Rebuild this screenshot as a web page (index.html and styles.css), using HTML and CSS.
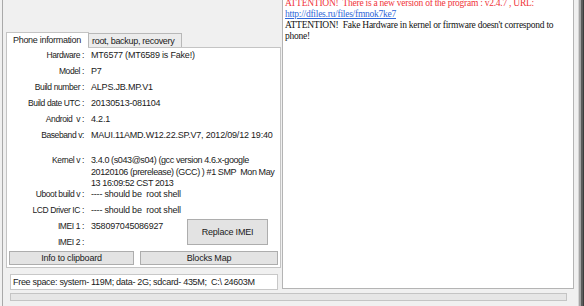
FILE: index.html
```html
<!DOCTYPE html>
<html lang="en">
<head>
    <meta charset="UTF-8">
    <title>MTK Droid Tools</title>
    <link rel="stylesheet" href="styles.css">
</head>
<body>

<div class="window">
    <div class="client">
        <div class="top">
            <div class="left">
                <div class="tabs">
                    <div class="tab active">Phone information</div>
                    <div class="tab">root, backup, recovery</div>
                </div>
                <div class="panel">
                    <div class="row"><span class="label">Hardware :</span><span class="value">MT6577 (MT6589 is Fake!)</span></div>
                    <div class="row"><span class="label">Model :</span><span class="value">P7</span></div>
                    <div class="row"><span class="label">Build number :</span><span class="value">ALPS.JB.MP.V1</span></div>
                    <div class="row"><span class="label">Build date UTC :</span><span class="value">20130513-081104</span></div>
                    <div class="row"><span class="label">Android  v :</span><span class="value">4.2.1</span></div>
                    <div class="row"><span class="label">Baseband v:</span><span class="value">MAUI.11AMD.W12.22.SP.V7, 2012/09/12 19:40</span></div>
                    <div class="row kernel"><span class="label">Kernel v :</span><span class="value">3.4.0 (s043@s04) (gcc version 4.6.x-google<br>20120106 (prerelease) (GCC) ) #1 SMP  Mon May<br>13 16:09:52 CST 2013</span></div>
                    <div class="row"><span class="label">Uboot build v :</span><span class="value">---- should be  root shell</span></div>
                    <div class="row"><span class="label">LCD Driver IC :</span><span class="value">---- should be  root shell</span></div>
                    <div class="imei">
                        <div class="imei-rows">
                            <div class="row"><span class="label">IMEI 1 :</span><span class="value">358097045086927</span></div>
                            <div class="row"><span class="label">IMEI 2 :</span><span class="value"></span></div>
                        </div>
                        <button class="btn btn-replace">Replace IMEI</button>
                    </div>
                    <div class="actions">
                        <button class="btn btn-info">Info to clipboard</button>
                        <button class="btn btn-blocks">Blocks Map</button>
                    </div>
                </div>
                <div class="free">Free space: system- 119M; data- 2G; sdcard- 435M;  C:\ 24603M</div>
            </div>
            <div class="log">
                <div class="warn">ATTENTION!  There is a new version of the program : v2.4.7 , URL:</div>
                <a class="link" href="#">http://dfiles.ru/files/fmnok7ke7</a>
                <div>ATTENTION!  Fake Hardware in kernel or firmware doesn't correspond to</div>
                <div>phone!</div>
            </div>
        </div>
        <div class="progress"></div>
    </div>
    <div class="edge"></div>
</div>

</body>
</html>
```

FILE: styles.css
```css
/* General Styling */
* {
    box-sizing: border-box;
    margin: 0;
    padding: 0;
}

body {
    width: 584px;
    height: 306px;
    overflow: hidden;
    background: #f0f0f0;
    font-family: "Liberation Sans", Arial, sans-serif;
    font-size: 9px;
    letter-spacing: -0.2px;
    color: #1a1a1a;
}

.window {
    display: flex;
    height: 306px;
}

.client {
    flex: 1;
    border-left: 1px solid #a9a9a9;
    margin-left: 2px;
}

.top {
    display: flex;
    height: 289px;
}

/* Left side: tab control */
.left {
    width: 279px;
    padding-top: 32px;
    padding-left: 3px;
}

.tabs {
    display: flex;
    align-items: flex-end;
    height: 15px;
    position: relative;
    z-index: 1;
}

.tab {
    height: 14px;
    line-height: 14px;
    border: 1px solid #b8b8b8;
    border-bottom: none;
    background: #ececec;
    white-space: nowrap;
    letter-spacing: -0.3px;
}

.tab.active {
    height: 16px;
    width: 83px;
    padding-left: 6px;
    line-height: 14px;
    background: #fff;
    border-color: #c4c4c4;
    margin-bottom: -1px;
}

.tab + .tab {
    margin-left: -1px;
    width: 94px;
    padding-left: 3px;
}

.panel {
    width: 275px;
    height: 221px;
    background: #fff;
    border: 1px solid #c4c4c4;
}

.row {
    display: grid;
    grid-template-columns: 77px 1fr;
    column-gap: 7px;
    height: 16px;
    line-height: 15px;
    white-space: pre;
}

.label {
    text-align: right;
    font-size: 8.5px;
    letter-spacing: -0.4px;
}

.row.kernel {
    margin-top: 11px;
    height: 32px;
    line-height: 11.5px;
}

.row.kernel .value {
    letter-spacing: -0.4px;
}

.imei {
    display: flex;
}

.imei-rows {
    width: 180px;
}

.btn {
    font-family: "Liberation Sans", Arial, sans-serif;
    font-size: 9px;
    letter-spacing: -0.2px;
    color: #1a1a1a;
    background: #e3e3e3;
    border: 1px solid #adadad;
    text-align: center;
}

.btn-replace {
    width: 81px;
    height: 26px;
}

.actions {
    display: flex;
    gap: 6px;
    padding-left: 2px;
}

.actions .btn {
    height: 14px;
    line-height: 12px;
}

.btn-info {
    width: 125px;
}

.btn-blocks {
    width: 138px;
}

.free {
    width: 268px;
    height: 16px;
    margin-top: 6px;
    margin-left: 4px;
    padding-left: 2px;
    line-height: 14px;
    letter-spacing: -0.3px;
    background: #fff;
    border: 1px solid #c8c8c8;
    white-space: pre;
}

/* Right side: log */
.log {
    width: 292px;
    background: #fff;
    border: 1px solid #b4b4b4;
    border-top: none;
    padding-left: 2px;
    font-family: "Liberation Serif", "Times New Roman", serif;
    font-size: 9.5px;
    line-height: 11px;
    letter-spacing: -0.25px;
    color: #111;
}

.log > * {
    white-space: pre;
}

.warn {
    margin-top: -2px;
    color: #f0353a;
}

.link {
    display: block;
    color: #2f67d8;
    text-decoration: underline;
}

.progress {
    width: 557px;
    height: 8px;
    margin: 4px 0 0 7px;
    background: #e6e6e6;
    border: 1px solid #c4c4c4;
}

.edge {
    width: 11px;
    background: linear-gradient(90deg, #f0f0f0 0 4px, #d4d4d4 4px 5px, #a4a4a4 5px 7px, #5c5c5c 7px 9px, #3c3c3c 9px);
}
```
